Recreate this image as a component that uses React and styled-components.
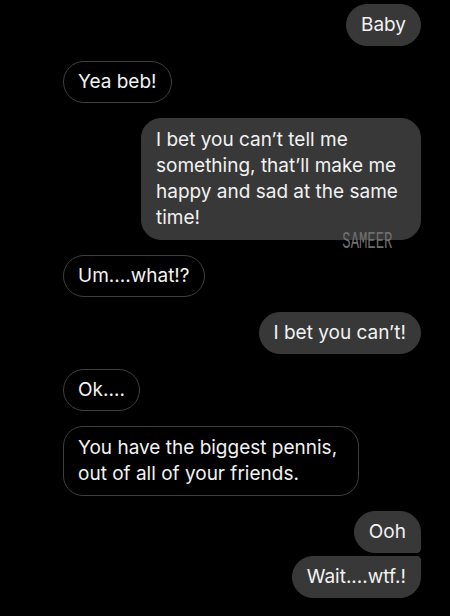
import styled, { createGlobalStyle } from "styled-components";

const GlobalStyle = createGlobalStyle`
  html, body {
    margin: 0;
    padding: 0;
    background: #000;
  }
  body {
    font-family: Inter, "Noto Sans", sans-serif;
    -webkit-font-smoothing: antialiased;
  }
`;

const Thread = styled.div`
  width: 450px;
  height: 616px;
  box-sizing: border-box;
  padding: 4px 29px 0 63px;
  display: flex;
  flex-direction: column;
  background: #000;
  overflow: hidden;
`;

const Row = styled.div`
  display: flex;
  position: relative;
  justify-content: ${(p) => (p.$mine ? "flex-end" : "flex-start")};
  margin-top: ${(p) => (p.$tight ? "3px" : "15px")};
  &:first-child {
    margin-top: 0;
  }
`;

const Bubble = styled.div`
  box-sizing: border-box;
  max-width: ${(p) => p.$max || 300}px;
  padding: 7px 14px;
  font-size: 19px;
  line-height: 26px;
  color: #f2f2f2;
  border-radius: 21px;
  background: ${(p) => (p.$mine ? "#383838" : "#000")};
  border: 1.5px solid ${(p) => (p.$mine ? "#383838" : "#3e3e3e")};
  ${(p) => p.$big && "border-radius: 20px; padding-top: 8px; padding-bottom: 8px;"}
  ${(p) => p.$tailBottom && "border-bottom-right-radius: 4px;"}
  ${(p) => p.$tailTop && "border-top-right-radius: 4px;"}
`;

const Watermark = styled.span`
  position: absolute;
  right: 29px;
  bottom: -13px;
  font-family: "Liberation Mono", "Courier New", monospace;
  font-size: 24px;
  line-height: 22px;
  color: #6f6f6f;
  transform: scaleX(0.58);
  transform-origin: right center;
`;

const messages = [
  { mine: true, text: "Baby" },
  { mine: false, text: "Yea beb!" },
  {
    mine: true,
    big: true,
    max: 280,
    text: "I bet you can\u2019t tell me something, that\u2019ll make me happy and sad at the same time!",
    mark: "SAMEER",
  },
  { mine: false, text: "Um....what!?" },
  { mine: true, text: "I bet you can\u2019t!" },
  { mine: false, text: "Ok...." },
  {
    mine: false,
    big: true,
    max: 296,
    text: "You have the biggest pennis, out of all of your friends.",
  },
  { mine: true, text: "Ooh", tailBottom: true },
  { mine: true, text: "Wait....wtf.!", tailTop: true, tight: true },
];

export default function App() {
  return (
    <>
      <GlobalStyle />
      <Thread>
        {messages.map((m, i) => (
          <Row key={i} $mine={m.mine} $tight={m.tight}>
            <Bubble
              $mine={m.mine}
              $big={m.big}
              $max={m.max}
              $tailBottom={m.tailBottom}
              $tailTop={m.tailTop}
            >
              {m.text}
            </Bubble>
            {m.mark && <Watermark>{m.mark}</Watermark>}
          </Row>
        ))}
      </Thread>
    </>
  );
}
